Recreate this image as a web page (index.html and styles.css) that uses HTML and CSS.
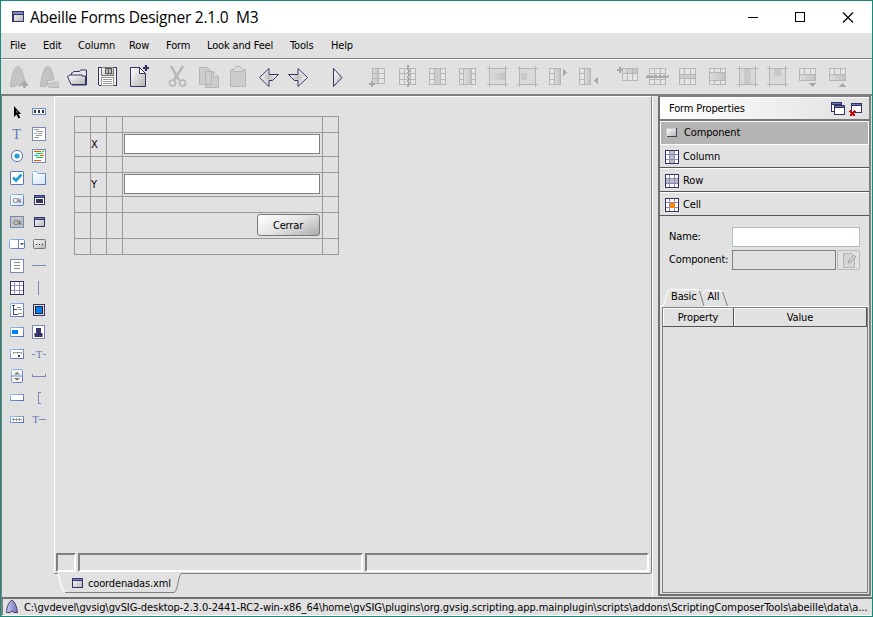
FILE: index.html
```html
<!DOCTYPE html>
<html lang="en">
<head>
<meta charset="utf-8">
<title>Abeille Forms Designer 2.1.0 M3</title>
<link rel="stylesheet" href="styles.css">
</head>
<body>
<svg class="defs" width="0" height="0">
  <defs>
    <linearGradient id="sheen" x1="0" y1="0" x2="1" y2="1"><stop offset="0" stop-color="#fff"/><stop offset="1" stop-color="#b4b4b4"/></linearGradient>
    <linearGradient id="fade" x1="0" y1="0" x2="1" y2="0"><stop offset="0" stop-color="#dcdcdc"/><stop offset="1" stop-color="#c2c2c2"/></linearGradient>
    <radialGradient id="glow"><stop offset="0" stop-color="#bcbcbc"/><stop offset="1" stop-color="#fafafa"/></radialGradient>
    <linearGradient id="edge" x1="0" y1="0" x2="1" y2="1"><stop offset="0" stop-color="#8cc4fa"/><stop offset="1" stop-color="#5a6ca8"/></linearGradient>
    <linearGradient id="sky" x1="0" y1="0" x2="1" y2="1"><stop offset="0" stop-color="#fff"/><stop offset="1" stop-color="#d4e6fa"/></linearGradient>
    <linearGradient id="violet" x1="0" y1="0" x2="1" y2="0"><stop offset="0" stop-color="#c8c8f0"/><stop offset="1" stop-color="#7070b8"/></linearGradient>
    <g id="win"><rect x=".5" y=".5" width="10" height="9" fill="url(#sheen)" stroke="#333366"/><path d="M1 1.5h9" stroke="#7c86c4"/><path d="M0 2.5h11" stroke="#333366"/></g>
    <g id="frame"><path d="M6.500 6v21M22.500 6v21M4 8.500h21M4 24.500h21" stroke="#b6b6b6" fill="none"/></g>
  </defs>
</svg>
<div class="window">
  <header class="titlebar">
    <svg class="app-icon" width="12" height="11"><rect x=".75" y=".75" width="10.500" height="9.500" fill="url(#sheen)" stroke="#333366" stroke-width="1.500"/><path d="M1 2h10" stroke="#7c86c4" stroke-width="1.500"/><path d="M0 3.500h12" stroke="#333366"/></svg>
    <h1>Abeille Forms Designer 2.1.0&nbsp; M3</h1>
    <svg class="controls" width="120" height="30" fill="none" stroke="#000"><path d="M5 15.500h10M52.500 10.500h9v9h-9z" shape-rendering="crispEdges"/><path d="M100 10.500l10 10M110 10.500l-10 10" shape-rendering="auto" stroke-width="1.200"/></svg>
  </header>
  <nav class="menu"><span class="m-file">File</span><span class="m-edit">Edit</span><span class="m-col">Column</span><span class="m-row">Row</span><span class="m-form">Form</span><span class="m-look">Look and Feel</span><span class="m-tools">Tools</span><span class="m-help">Help</span></nav>
  <div class="toolbar">
    <svg class="off soft"><path d="M7.500 26.500C8 18 11 7 14.500 6.500S20 13 22 22L18 23 17 27 14.500 24.500 12 26.500z" fill="#c4c4c4"/><path d="M18 24.500h7M21.500 21v7" stroke="#a6a6a6" stroke-width="2.500"/></svg>
    <svg class="off soft"><path d="M7.500 26.500C8 18 11 7 14.500 6.500S19 11 21 19L14 21 14 25 12 26.500z" fill="#c4c4c4"/><path d="M14.500 22.500v-2h4l1 1.500h6v5h-9z" fill="#ddd"/><path d="M14 23.500h9l3 4H16z" fill="#ccc"/></svg>
    <svg class="soft"><path d="M8.500 15.500v-2.500h1l1-1.500h6l1-1.500h6v15H9" fill="#e8e8e8" stroke="#333366"/><path d="M4.500 16.500l2.500-1.500H19v1h3.500v8.500H8z" fill="url(#sheen)" stroke="#333366"/></svg>
    <svg><path d="M5.500 7.500h18v18h-17l-1-1z" fill="#f2f2f2" stroke="#333366"/><path d="M8.500 7.500h12v8h-12z" fill="url(#sheen)" stroke="#777"/><path d="M12.500 8.500h3v5h-3zM15.500 8.500h3v5h-3z" fill="#bbb" stroke="#555"/><path d="M8.500 17.500h12v8h-12z" fill="#fff" stroke="#999"/><path d="M10 19.500h9M10 21.500h9M10 23.500h9" stroke="#999"/></svg>
    <svg class="soft"><path d="M7.500 7.500h9l6 6v13h-15z" fill="url(#sheen)" stroke="#333366"/><path d="M16.500 7.500v6h6z" fill="#fff" stroke="#333366"/><path d="M20 8h6M23 5v6" stroke="#333366" stroke-width="2.200"/></svg>
    <i class="gap"></i>
    <svg class="off soft"><path d="M8 6l8 14M20 6l-9 14" stroke-width="2.500"/><circle cx="9.500" cy="23" r="3" stroke-width="1.700"/><circle cx="19.500" cy="23" r="3" stroke-width="1.700"/></svg>
    <svg class="off soft"><path d="M6.500 7.500h8l4 4v13h-12zM12.500 11.500h8l5 5v11h-13z" fill="#ccc"/><path d="M20.500 11.500v5h5" fill="#ddd"/></svg>
    <svg class="off soft"><path d="M7.500 9.500h15v17h-15z" fill="#cdcdcd"/><path d="M10 10.500l3-4h4l3 4v1H10z" fill="#ddd"/></svg>
    <svg class="soft"><path d="M6.500 17.500L16 8.500v6h9.500l-3 3-3 3H16v6z" fill="url(#glow)" stroke="#333366"/></svg>
    <svg class="soft"><path d="M24.500 17.500L15 8.500v6H5.500l3 3 3 3H15v6z" fill="url(#glow)" stroke="#333366"/></svg>
    <i class="gap"></i>
    <svg class="soft"><path d="M10.500 8.500v18L19 17.500z" fill="url(#sheen)" stroke="#333366"/></svg>
    <i class="gap"></i>
    <svg class="off"><path d="M9.500 8.500h12v15h-12z" fill="#e5e5e5"/><path d="M9.500 8.500h6v15h-6z" fill="url(#fade)"/><path d="M15.500 8v16M9 13.500h13M9 18.500h13"/><path d="M6 24h6M9 21v6" stroke-width="2" stroke="#a8a8a8"/></svg>
    <svg class="off"><path d="M6.500 8.500h16v16h-16z" fill="#e5e5e5"/><path d="M11.500 8v17M17.500 8v17M6 13.500h17M6 19.500h17"/><path d="M14.500 5v4l2 2-2 2 2 2-2 2 2 2-2 2 2 2-2 4" stroke-width="2" stroke="#a8a8a8"/></svg>
    <svg class="off"><path d="M6.500 8.500h16v16h-16z" fill="#e5e5e5"/><path d="M12 9h5v15h-5z" fill="#ccc" stroke="none"/><path d="M11.500 8v17M17.500 8v17M6 13.500h6M17 13.500h6M6 19.500h6M17 19.500h6"/></svg>
    <svg class="off"><path d="M6.500 8.500h16v16h-16z" fill="#e5e5e5"/><path d="M11 9h8v15h-8z" fill="url(#fade)" stroke="none"/><path d="M10.500 8v17M18.500 8v17M6 13.500h5M18 13.500h5M6 19.500h5M18 19.500h5"/></svg>
    <svg class="off"><path d="M7 9h15v15H7z" fill="#d9d9d9" stroke="none"/><path d="M7 13h15v7H7z" fill="url(#fade)" stroke="none"/><use href="#frame"/></svg>
    <svg class="off"><path d="M7 9h15v15H7z" fill="#d9d9d9" stroke="none"/><path d="M8 13h6v7H8z" fill="#c8c8c8" stroke="none"/><use href="#frame"/></svg>
    <svg class="off"><path d="M6.500 8.500h11v16h-11z" fill="#e5e5e5"/><path d="M11.500 8.500h6v16h-6z" fill="url(#fade)"/><path d="M6 13.500h5M6 19.500h5"/><path d="M20 9v7l4-3.500z" fill="#aaa" stroke="none"/></svg>
    <svg class="off"><path d="M6.500 8.500h11v16h-11z" fill="#e5e5e5"/><path d="M11.500 8.500h6v16h-6z" fill="url(#fade)"/><path d="M6 13.500h5M6 19.500h5"/><path d="M25 17v7l-4-3.500z" fill="#aaa" stroke="none"/></svg>
    <i class="gap"></i>
    <svg class="off"><path d="M9.500 8.500h15v12h-15z" fill="#e5e5e5"/><path d="M9.500 8.500h15v5h-15z" fill="url(#fade)"/><path d="M14.500 8v13M19.500 8v13"/><path d="M4 10h6M7 7v6" stroke-width="2" stroke="#a8a8a8"/></svg>
    <svg class="off"><path d="M6.500 8.500h16v16h-16z" fill="#e5e5e5"/><path d="M11.500 8v17M17.500 8v17M6 13.500h17M6 19.500h17"/><path d="M3 17.500l2-1.500 2 1.500 2-1.500 2 1.500 2-1.500 2 1.500 2-1.500 2 1.500 2-1.500 2 1.500 3-1.500" stroke-width="2" stroke="#a8a8a8"/></svg>
    <svg class="off"><path d="M6.500 8.500h16v16h-16z" fill="#e5e5e5"/><path d="M6.500 14.500h16v4h-16z" fill="#ccc"/><path d="M11.500 9v5M17.500 9v5M11.500 19v5M17.500 19v5"/></svg>
    <svg class="off"><path d="M6.500 8.500h16v16h-16z" fill="#e5e5e5"/><path d="M6.500 12.500h16v8h-16z" fill="url(#fade)"/><path d="M11.500 9v4M17.500 9v4M11.500 21v3M17.500 21v3"/></svg>
    <svg class="off"><path d="M7 9h15v15H7z" fill="#d9d9d9" stroke="none"/><path d="M11 9h7v15h-7z" fill="#cacaca" stroke="none"/><use href="#frame"/></svg>
    <svg class="off"><path d="M7 9h15v15H7z" fill="#d9d9d9" stroke="none"/><path d="M11 9h7v7h-7z" fill="#c8c8c8" stroke="none"/><use href="#frame"/></svg>
    <svg class="off"><path d="M6.500 8.500h16v12h-16z" fill="#e5e5e5"/><path d="M6.500 14.500h16v6h-16z" fill="url(#fade)"/><path d="M11.500 9v5M17.500 9v5"/><path d="M16 23h7l-3.500 4z" fill="#aaa" stroke="none"/></svg>
    <svg class="off"><path d="M6.500 8.500h16v12h-16z" fill="#e5e5e5"/><path d="M6.500 14.500h16v6h-16z" fill="url(#fade)"/><path d="M11.500 9v5M17.500 9v5"/><path d="M16 27h7l-3.500-4z" fill="#aaa" stroke="none"/></svg>
  </div>
  <main class="main">
    <aside class="palette">
      <svg class="soft"><path d="M8 5v11l2.500-2.500 2 4 1.800-1-2-3.500H15z" fill="#000"/><path d="M10 9v2.500h2z" fill="#8070c0"/></svg>
      <svg><rect x="4.500" y="7.500" width="13" height="6" fill="#f4f8ff" stroke="#6c8cc8"/><path d="M6 9h2v3H6zM10 9h2v3h-2zM14 9h2v3h-2z" fill="#333"/></svg>
      <svg class="soft"><text x="10.500" y="16" class="t-icon">T</text></svg>
      <svg><rect x="4.500" y="4.500" width="13" height="13" fill="#fff" stroke="#7888b8"/><path d="M6 6.500h5M8 8.500h7M6 10.500h3M10 10.500h4M8 12.500h6M6 14.500h5" stroke="#999"/></svg>
      <svg class="soft"><circle cx="11" cy="11" r="5.600" fill="#fff" stroke="#5c72b4"/><circle cx="11" cy="11" r="2.600" fill="#28a0dc"/></svg>
      <svg><rect x="4.500" y="4.500" width="13" height="13" fill="#fff" stroke="#7888b8"/><path d="M6 6h7v1H6zM12 10h4v1h-4zM6 15h7v1H6z" fill="#ff5000"/><path d="M14 6h2v1h-2zM8 8h7v1H8zM8 12h7v1H8z" fill="#00e828"/><path d="M6 10h5v1H6z" fill="#0ac0ff"/></svg>
      <svg class="soft"><rect x="4.500" y="4.500" width="13" height="13" rx=".5" fill="#fff" stroke="#5c7cb8"/><path d="M7 10.500l3 3 5.500-6" stroke="#289cd8" stroke-width="2.600" fill="none"/></svg>
      <svg class="soft"><path d="M4.500 5.500q0-1 1-1h3l1.500 2h7.500v11h-13z" fill="url(#sky)" stroke="url(#edge)"/></svg>
      <svg class="soft"><rect x="4.500" y="5.500" width="13" height="11" rx="1" fill="url(#sky)" stroke="url(#edge)"/><text x="11" y="13.500" class="ok">Ok</text></svg>
      <svg><rect x="6.500" y="6.500" width="10" height="9" fill="#fff" stroke="#333366"/><path d="M7 7h9v1H7z" fill="#6070c0"/><path d="M6 8h11v1H6zM8 10h7v4H8z" fill="#333366"/></svg>
      <svg class="soft"><rect x="4.500" y="5.500" width="13" height="11" fill="#c4c4c4" stroke="#7888b8"/><text x="11.500" y="14" class="ok">Ok</text></svg>
      <svg><use href="#win" x="6" y="6"/></svg>
      <svg class="soft"><rect x="3.500" y="6.500" width="15" height="9" rx="1" fill="#fff" stroke="url(#edge)"/><path d="M12.500 7v8" stroke="#7888b8"/><path d="M14 10h4l-2 2.500z" fill="#556"/></svg>
      <svg class="soft"><rect x="5.500" y="6.500" width="12" height="9" rx="1" fill="url(#sheen)" stroke="#777"/><path d="M8 11.500h1M11 11.500h1M14 11.500h1" stroke="#222"/></svg>
      <svg><rect x="4.500" y="4.500" width="13" height="13" rx="1" fill="#fff" stroke="#7888b8"/><path d="M8 7.500h6M8 10.500h6M8 13.500h6" stroke="#888"/></svg>
      <svg><path d="M4 10.500h14" stroke="#7888b8"/></svg>
      <svg><rect x="4.500" y="4.500" width="13" height="13" fill="#fff" stroke="#333366"/><path d="M8.500 5v12M13.500 5v12M5 8.500h12M5 13.500h12" stroke="#9090c8"/></svg>
      <svg><path d="M10.500 4v14" stroke="#7888b8"/></svg>
      <svg><rect x="4.500" y="4.500" width="13" height="13" rx="1" fill="#fff" stroke="url(#edge)"/><path d="M6 6.500h3M7.500 7v8h4M7.500 10.500h3" stroke="#444488" fill="none"/><path d="M11 8.500h4M12 10.500h4M12 14.500h4" stroke="#999"/></svg>
      <svg><rect x="5.500" y="5.500" width="11" height="11" fill="#e1e1e1" stroke="#333366"/><rect x="7.500" y="7.500" width="7" height="7" fill="#0080ff" stroke="#222"/></svg>
      <svg><rect x="4.500" y="6.500" width="13" height="9" rx="1" fill="#fff" stroke="url(#edge)"/><path d="M6 9h6v4H6z" fill="#0080ff"/></svg>
      <svg class="soft"><rect x="4.500" y="4.500" width="12" height="13" fill="#fff" stroke="#7888b8"/><path d="M8 7h5v4l-.5 1h2v4h-8v-4h2l-.5-1z" fill="#333366"/></svg>
      <svg><rect x="4.500" y="6.500" width="13" height="9" rx="1" fill="#fff" stroke="url(#edge)"/><path d="M7 9.500h9M7.500 10v1M11.500 10v1M15.500 10v1" stroke="#999"/><path d="M12 12h2v2h-2z" fill="#333380"/></svg>
      <svg class="soft"><text x="11" y="14.500" class="t-small">T</text><path d="M4 11.500h3M15 11.500h3" stroke="#7888b8"/></svg>
      <svg class="soft"><rect x="5.500" y="4.500" width="11" height="13" rx="1" fill="#f4f4f4" stroke="url(#edge)"/><path d="M5 11h12" stroke="#7888b8"/><path d="M8 9.500h6L11 7zM8 13h6l-3 2.500z" fill="#777"/></svg>
      <svg><path d="M4.500 9v2.500h13V9" stroke="#7888b8" fill="none"/></svg>
      <svg><rect x="4.500" y="7.500" width="13" height="6" rx="1" fill="#fff" stroke="url(#edge)"/></svg>
      <svg><path d="M12.500 5.500h-2v11h2" stroke="#7888b8" fill="none"/></svg>
      <svg><rect x="4.500" y="7.500" width="13" height="6" rx="1" fill="#fff" stroke="url(#edge)"/><path d="M6 10.500h10M7.500 9v3M10.500 9v3M13.500 9v3" stroke="#999"/></svg>
      <svg class="soft"><text x="7.500" y="14" class="t-small">T</text><path d="M11 10.500h7" stroke="#7888b8"/></svg>
    </aside>
    <section class="editor">
      <div class="canvas">
        <div class="form-grid">
          <i></i><i></i><i></i><i></i><i></i>
          <i></i><label>X</label><i></i><div class="cell"><input aria-label="X"></div><i></i>
          <i></i><i></i><i></i><i></i><i></i>
          <i></i><label>Y</label><i></i><div class="cell"><input aria-label="Y"></div><i></i>
          <i></i><i></i><i></i><i></i><i></i>
          <i></i><i></i><i></i><div class="cell end"><button>Cerrar</button></div><i></i>
          <i></i><i></i><i></i><i></i><i></i>
        </div>
        <div class="wells"><i></i><i></i><i></i></div>
      </div>
      <div class="file-tabs">
        <svg class="tab-shape" width="598" height="22" fill="none"><path d="M0 .5h4M126.500 .5H597" stroke="#808080" shape-rendering="crispEdges"/><path d="M4 .5c2 4 2 16 7 18.500" stroke="#fff" stroke-width="1.300"/><path d="M11 19.500h109c4-2 4-15 7-19" stroke="#808080"/></svg>
        <svg width="11" height="10"><use href="#win"/></svg><span>coordenadas.xml</span>
      </div>
    </section>
    <div class="divider"></div>
    <aside class="props">
      <div class="props-title"><span>Form Properties</span>
        <svg width="34" height="17"><path d="M1.500 2.500h10v9h-10z" fill="#fff" stroke="#333366"/><path d="M2 3.500h9" stroke="#6878c0"/><path d="M1 4.500h11" stroke="#333366"/><path d="M4.500 5.500h10v9h-10z" fill="#fff" stroke="#333366"/><path d="M5 6.500h9" stroke="#6878c0"/><path d="M4 7.500h11" stroke="#333366"/><path d="M21.500 3.500h10v9h-10z" fill="#fff" stroke="#333366"/><path d="M22 4.500h9" stroke="#6878c0"/><path d="M21 5.500h11" stroke="#333366"/><path d="M20 11l5 5M25 11l-5 5" stroke="#d00000" stroke-width="2"/></svg>
      </div>
      <div class="acc sel"><svg width="16" height="16"><rect x="2.500" y="3.500" width="10" height="8" fill="url(#sheen)" stroke="#ccc"/><path d="M12.500 3v8.500H3" stroke="#444466" fill="none"/></svg><span>Component</span></div>
      <div class="acc"><svg width="16" height="16"><path d="M1.500 1.500h13v13h-13z" fill="#fff" stroke="#333366"/><path d="M6 2h4v12H6z" fill="#bbb"/><path d="M5.500 2v12M10.500 2v12M2 5.500h12M2 10.500h12" stroke="#8888c8"/></svg><span>Column</span></div>
      <div class="acc"><svg width="16" height="16"><path d="M1.500 1.500h13v13h-13z" fill="#fff" stroke="#333366"/><path d="M2 6h12v4H2z" fill="#bbb"/><path d="M5.500 2v12M10.500 2v12M2 5.500h12M2 10.500h12" stroke="#8888c8"/></svg><span>Row</span></div>
      <div class="acc"><svg width="16" height="16"><path d="M1.500 1.500h13v13h-13z" fill="#fff" stroke="#333366"/><path d="M5.500 2v12M10.500 2v12M2 5.500h12M2 10.500h12" stroke="#8888c8"/><path d="M6 6h5v5H6z" fill="#ff8400"/></svg><span>Cell</span></div>
      <div class="fields">
        <label>Name:</label><input class="name" aria-label="Name">
        <label>Component:</label><div class="pair"><input class="comp" aria-label="Component" readonly><div class="edit"><svg class="soft" width="22" height="19"><path d="M5.500 2.500h8l3 3v11h-11z" fill="#d4d4d4" stroke="#b4b4b4"/><path d="M10 12l1-3 5-5 2 2-5 5z" fill="#ccc" stroke="#aaa"/></svg></div></div>
      </div>
      <div class="tabs">
        <svg class="tab-shape" width="210" height="19" fill="none"><path d="M0 17.500h3M43 17.500h166" stroke="#fff" stroke-width="1"/><path d="M3 17.500L8 1.500 9.500 .5h27l3 1.500M43 4.500l1.500-3h15l3 1.500" stroke="#fff"/><path d="M39.500 2l4.500 15M62.500 3l5 14" stroke="#808080"/></svg>
        <span>Basic</span><span class="all">All</span>
      </div>
      <div class="table"><div class="thead"><span>Property</span><span>Value</span></div></div>
    </aside>
  </main>
  <footer class="status"><svg class="soft" width="12" height="14"><path d="M.5 12.500C.5 7 3.500 .5 6 .5s5 6.500 5.500 12H8L6 11l-2 1.500z" fill="url(#violet)" stroke="#444466"/></svg><span>C:\gvdevel\gvsig\gvSIG-desktop-2.3.0-2441-RC2-win-x86_64\home\gvSIG\plugins\org.gvsig.scripting.app.mainplugin\scripts\addons\ScriptingComposerTools\abeille\data\a...</span></footer>
</div>
</body>
</html>
```
FILE: styles.css
```css
* { box-sizing: border-box; }
body { margin: 0; font: 11px/14px "DejaVu Sans", sans-serif; font-stretch: condensed; letter-spacing: -.15px; color: #000; }
svg { display: block; flex: none; shape-rendering: crispEdges; fill: none; }
.soft { shape-rendering: auto; }
.defs { position: absolute; }
input, button { font: inherit; letter-spacing: inherit; margin: 0; padding: 0; border-radius: 0; outline: 0; }
.window { width: 873px; height: 617px; border: 1px solid #198a78; background: #e1e1e1; display: flex; flex-direction: column; overflow: hidden; }
.titlebar { height: 32px; flex: none; background: #fff; display: flex; align-items: center; padding: 0 9px 0 11px; }
h1 { margin: -1px auto 0 6px; font: 15.5px/30px "Open Sans", sans-serif; font-stretch: normal; letter-spacing: -.23px; white-space: nowrap; }
.controls { margin-top: -1px; }
.app-icon { margin-top: -2px; }
.menu { height: 26px; flex: none; border-bottom: 1px solid #808080; padding: 6px 0 0 9px; display: flex; }
.menu span { white-space: nowrap; }
.m-file { width: 33px; } .m-edit { width: 35px; } .m-col { width: 51px; } .m-row { width: 37px; }
.m-form { width: 41px; } .m-look { width: 83px; } .m-tools { width: 41px; }
.toolbar { height: 37px; flex: none; border-top: 1px solid #fff; border-bottom: 2px solid #808080; display: flex; padding-left: 2px; }
.toolbar svg { width: 30px; height: 34px; }
.toolbar .gap { width: 10px; }
.off { stroke: #b6b6b6; }
.main { flex: 1; display: flex; min-height: 0; }
.palette { width: 53px; padding: 5px 4px 0 4px; border-left: 1px solid #808080; display: grid; grid-template-columns: 22px 22px; grid-auto-rows: 22px; }
.palette svg { width: 22px; height: 22px; }
.t-icon { font: 14px "Liberation Serif", serif; fill: #6478b0; text-anchor: middle; }
.t-small { font: 11px "Liberation Serif", serif; fill: #6478b0; text-anchor: middle; }
.ok { font: 7px "Liberation Sans", sans-serif; fill: #555; text-anchor: middle; letter-spacing: -.3px; }
.editor { width: 598px; display: flex; flex-direction: column; }
.canvas { height: 477px; border: solid #fff; border-width: 1px 1px 0; border-right-color: #808080; display: flex; flex-direction: column; justify-content: space-between; padding: 19px 1px 1px 19px; }
.form-grid { display: grid; grid-template-columns: 16px 16px 16px 200px 16px; grid-template-rows: 16px 24px 16px 24px 16px 26px 16px; width: 265px; border: solid #999; border-width: 1px 0 0 1px; }
.form-grid > * { border: solid #999; border-width: 0 1px 1px 0; }
.form-grid label { padding: 5px 0 0 0; }
.cell { padding: 1px; display: flex; }
.cell input { width: 196px; height: 20px; border: 1px solid #808080; background: #fff; }
.end { justify-content: flex-end; padding-right: 2px; }
.end button { width: 63px; height: 22px; padding: 1px 1px 0 0; border: 1px solid #777; border-radius: 3px; background: linear-gradient(155deg, #fff, #e4e4e4 50%, #acacac); }
.wells { display: flex; gap: 2px; margin-left: -18px; }
.wells i { height: 19px; border: 2px solid; border-color: #808080 #fff #fff #808080; width: 285px; }
.wells i:first-child { width: 20px; }
.wells i:last-child { width: 284px; }
.file-tabs { height: 23px; position: relative; display: flex; align-items: flex-start; padding: 4px 0 0 18px; }
.file-tabs > svg:nth-of-type(2) { margin: 1px 5px 0 0; }
.tab-shape { position: absolute; left: 0; top: 0; shape-rendering: auto; }
.divider { width: 6px; border-left: 1px solid #fff; }
.props { width: 213px; border: 2px solid #808080; border-top-width: 1px; border-bottom: 2px solid #707070; border-left-color: #707070; display: flex; flex-direction: column; margin-bottom: 1px; }
.props-title { height: 24px; flex: none; display: flex; align-items: center; justify-content: space-between; padding: 0 5px 0 9px; border-top: 1px solid #fff; border-bottom: 2px solid #777; background: linear-gradient(90deg, #fff, #e1e1e1); }
.acc { height: 24px; flex: none; border-top: 1px solid #fff; border-bottom: 1px solid #555; display: flex; align-items: center; gap: 3px; padding-left: 4px; }
.acc svg { margin-top: -1px; }
.acc:not(.sel) { position: relative; top: -1px; padding-top: 2px; }
.acc.sel { background: #b4b4b4; border: 1px solid #fff; border-bottom-color: #777; padding-left: 4px; }
.acc.sel svg { margin-left: -1px; margin-right: 1px; }
.fields { display: grid; grid-template-columns: 63px 128px; row-gap: 2px; padding: 9px 0 0 9px; grid-auto-rows: 21px; align-items: center; }
.fields input { border: 1px solid #b4bcc4; background: #fff; height: 20px; }
.fields .name { width: 128px; }
.pair { display: flex; gap: 1px; }
.pair .comp { width: 104px; background: #e1e1e1; border-color: #808080; }
.edit { width: 23px; height: 20px; border: 1px solid #b4bcc4; border-radius: 2px; }
.tabs { height: 18px; flex: none; margin-top: 19px; position: relative; display: flex; padding: 1px 0 0 11px; }
.tabs .all { margin-left: 11px; }
.table { flex: 1; margin: 0 1px 1px 2px; border: 1px solid #808080; width: 206px; }
.thead { display: grid; grid-template-columns: 71px 1fr; text-align: center; height: 19px; }
.thead span { border: solid #555; border-width: 0 1px 1px 0; box-shadow: inset 1px 1px #fff; padding-top: 3px; }
.status { height: 19px; flex: none; border-top: 2px solid #707070; border-bottom: 1px solid #fff; border-left: 2px solid #808080; display: flex; align-items: center; padding-left: 3px; gap: 6px; white-space: nowrap; letter-spacing: -.068px; }
.status span { padding-top: 1px; }
```
